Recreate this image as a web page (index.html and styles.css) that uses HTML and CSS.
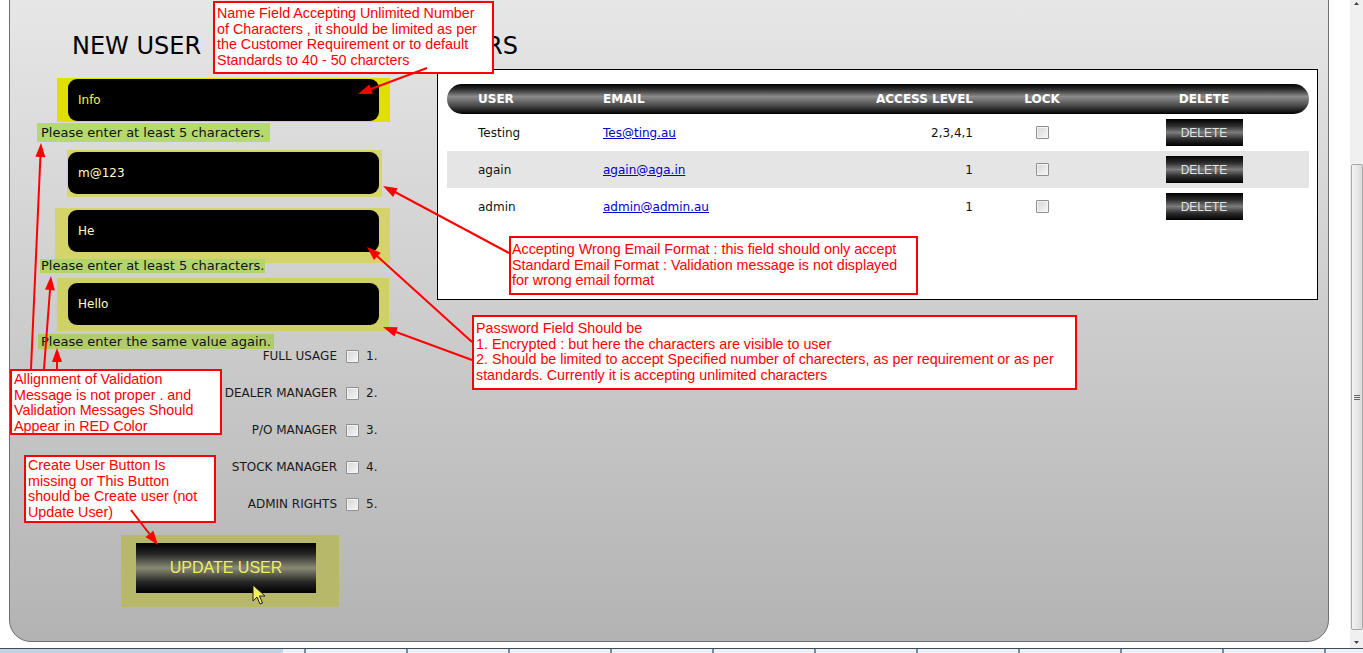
FILE: index.html
```html
<!DOCTYPE html>
<html>
<head>
<meta charset="utf-8">
<title>New User</title>
<link rel="stylesheet" href="styles.css">
</head>
<body>
<div class="page">
  <div class="viewport">
    <div class="main">
      <div class="panel">
        <div class="left-col">
          <h2 class="title title-left">NEW USER</h2>
          <form class="user-form">
            <div class="field field-name"><input class="txt txt-focus" value="Info"></div>
            <div class="err err-1">Please enter at least 5 characters.</div>
            <div class="field field-email"><input class="txt" value="m@123"></div>
            <div class="field field-pass"><input class="txt" value="He"></div>
            <div class="err err-2">Please enter at least 5 characters.</div>
            <div class="field field-confirm"><input class="txt" value="Hello"></div>
            <div class="err err-3">Please enter the same value again.</div>
            <div class="roles">
              <label class="role"><span class="role-name">FULL USAGE</span><input type="checkbox" class="chk"><span class="role-num">1.</span></label>
              <label class="role"><span class="role-name">DEALER MANAGER</span><input type="checkbox" class="chk"><span class="role-num">2.</span></label>
              <label class="role"><span class="role-name">P/O MANAGER</span><input type="checkbox" class="chk"><span class="role-num">3.</span></label>
              <label class="role"><span class="role-name">STOCK MANAGER</span><input type="checkbox" class="chk"><span class="role-num">4.</span></label>
              <label class="role"><span class="role-name">ADMIN RIGHTS</span><input type="checkbox" class="chk"><span class="role-num">5.</span></label>
            </div>
            <div class="submit-wrap"><button type="button" class="btn-update">UPDATE USER</button></div>
          </form>
        </div>
        <div class="right-col">
          <h2 class="title title-right">USERS</h2>
          <div class="table-box">
            <div class="trow thead">
              <div class="c-user">USER</div>
              <div class="c-email">EMAIL</div>
              <div class="c-access">ACCESS LEVEL</div>
              <div class="c-lock">LOCK</div>
              <div class="c-del">DELETE</div>
            </div>
            <div class="trow">
              <div class="c-user">Testing</div>
              <div class="c-email"><a href="#">Tes@ting.au</a></div>
              <div class="c-access">2,3,4,1</div>
              <div class="c-lock"><input type="checkbox" class="chk chk-t"></div>
              <div class="c-del"><button type="button" class="btn-del">DELETE</button></div>
            </div>
            <div class="trow alt">
              <div class="c-user">again</div>
              <div class="c-email"><a href="#">again@aga.in</a></div>
              <div class="c-access">1</div>
              <div class="c-lock"><input type="checkbox" class="chk chk-t"></div>
              <div class="c-del"><button type="button" class="btn-del">DELETE</button></div>
            </div>
            <div class="trow">
              <div class="c-user">admin</div>
              <div class="c-email"><a href="#">admin@admin.au</a></div>
              <div class="c-access">1</div>
              <div class="c-lock"><input type="checkbox" class="chk chk-t"></div>
              <div class="c-del"><button type="button" class="btn-del">DELETE</button></div>
            </div>
          </div>
        </div>
      </div>
    </div>
    <div class="scrollbar">
      <svg class="sb-btn" width="13" height="17" viewBox="0 0 13 17"><path d="M4 5 L6.5 2 L9 5 Z" fill="#444"/></svg>
      <div class="sb-thumb"><span></span><span></span><span></span></div>
      <div class="sb-space"></div>
      <svg class="sb-btn" width="13" height="17" viewBox="0 0 13 17"><path d="M4 10 L9 10 L6.5 13 Z" fill="#444"/></svg>
    </div>
  </div>
  <div class="taskbar"></div>

  <div class="note note-1">Name Field Accepting Unlimited Number<br>of Characters , it should be limited as per<br>the Customer Requirement or to default<br>Standards to 40 - 50 charcters</div>
  <div class="note note-2">Accepting Wrong Email Format : this field should only accept<br>Standard Email Format : Validation message is not displayed<br>for wrong email format</div>
  <div class="note note-3">Password Field Should be<br>1. Encrypted : but here the characters are visible to user<br>2. Should be limited to accept Specified number of charecters, as per requirement or as per<br>standards. Currently it is accepting unlimited characters</div>
  <div class="note note-4">Allignment of Validation<br>Message is not proper . and<br>Validation Messages Should<br>Appear in RED Color</div>
  <div class="note note-5">Create User Button Is<br>missing or This Button<br>should be Create user (not<br>Update User)</div>

  <svg class="arrows" width="1363" height="653" viewBox="0 0 1363 653">
    <g stroke="#f00" stroke-width="2" fill="none">
      <line x1="427" y1="68" x2="371" y2="89"/>
      <line x1="509" y1="253" x2="395" y2="192"/>
      <line x1="472" y1="342" x2="377" y2="256"/>
      <line x1="472" y1="360" x2="396" y2="332"/>
      <line x1="31" y1="369" x2="40.4" y2="157"/>
      <line x1="44" y1="369" x2="50" y2="290"/>
      <line x1="57" y1="369" x2="57" y2="362"/>
      <line x1="131" y1="510" x2="149.5" y2="534"/>
    </g>
    <g fill="#f00">
      <polygon points="358,94 372.9,93.8 369.3,84.4"/>
      <polygon points="383,186 393.1,197 397.7,188.2"/>
      <polygon points="367,247 374,260.1 380.8,252.7"/>
      <polygon points="383,327 394.4,336.6 397.8,327.2"/>
      <polygon points="41,143 35.4,156.8 45.4,157.2"/>
      <polygon points="51,276 45,289.6 54.9,290.4"/>
      <polygon points="57,348 52,362 62,362"/>
      <polygon points="158,545 153.4,530.8 145.5,537"/>
    </g>
  </svg>

  <svg class="cursor" width="14" height="22" viewBox="0 0 14 22">
    <path d="M1 1 L1 17 L5 13 L8 20 L10.5 19 L7.5 12 L13 12 Z" fill="#f4f060" stroke="#222" stroke-width="1" stroke-linejoin="round"/>
  </svg>
</div>
</body>
</html>
```

FILE: styles.css
```css
* { box-sizing: border-box; }

html, body {
  margin: 0;
  padding: 0;
  background: #fff;
}

body {
  font-family: "DejaVu Sans", Verdana, sans-serif;
  font-size: 12px;
  color: #111;
  overflow: hidden;
}

.page {
  position: relative;
  width: 1363px;
  height: 653px;
  overflow: hidden;
  display: flex;
  flex-direction: column;
}

.viewport {
  display: flex;
  height: 648px;
  flex: none;
}

.main {
  width: 1350px;
  height: 648px;
  overflow: hidden;
  flex: none;
}

.panel {
  margin: -20px 0 0 9px;
  width: 1320px;
  height: 662px;
  border: 1px solid #6e6e6e;
  border-radius: 0 0 22px 22px;
  background: linear-gradient(to bottom, #e8e8e8, #b3b3b3);
  padding-top: 51px;
  display: flex;
}

.left-col { width: 427px; flex: none; }
.right-col { width: 881px; flex: none; }

.title {
  margin: 0;
  font-weight: normal;
  font-size: 24px;
  line-height: 28px;
  color: #000;
  white-space: nowrap;
}
.title-left { margin-left: 62px; }
.title-right { margin-left: 1px; }

.user-form { margin-top: 18px; }

.field { width: max-content; }

.txt {
  display: block;
  width: 311px;
  height: 42px;
  border: 0;
  outline: 0;
  border-radius: 9px;
  background: #000;
  color: #ffffc4;
  font: 12px "DejaVu Sans", Verdana, sans-serif;
  padding: 0 10px;
}
.txt-focus { color: #f6f640; }

.field-name {
  margin-left: 47px;
  padding: 1px 11px;
  background: #e0e000;
}
.field-email {
  margin: 8px 0 0 57px;
  padding: 2px 3px 3px 1px;
  background: #d6d66c;
}
.field-pass {
  margin: 11px 0 0 45px;
  padding: 2px 11px 11px 13px;
  background: #d4d46a;
}
.field-confirm {
  margin: 5px 0 0 47px;
  padding: 5px 10px 6px 11px;
  background: #d0d068;
}

.err {
  width: max-content;
  font-size: 13px;
  color: #111;
  white-space: nowrap;
}
.err-1 {
  margin: 1px 0 0 27px;
  padding: 0 6px 0 4px;
  line-height: 19px;
  background: #b4da6c;
}
.err-2 {
  margin: -4px 0 0 30px;
  padding: 0 1px;
  line-height: 14px;
  background: #b2d46c;
}
.err-3 {
  margin: 3px 0 0 28px;
  padding: 0 3px;
  line-height: 15px;
  background: #b0cc6a;
}

.roles {
  margin-top: -3px;
  display: flex;
  flex-direction: column;
  gap: 17px;
}
.role {
  display: flex;
  align-items: center;
  height: 20px;
}
.role-name {
  width: 327px;
  text-align: right;
  font-size: 12px;
  color: #1a1a1a;
}
.role-num {
  margin-left: 7px;
  font-size: 12px;
  color: #1a1a1a;
}

.chk {
  -webkit-appearance: none;
  appearance: none;
  display: inline-block;
  margin: 0 0 0 9px;
  width: 13px;
  height: 13px;
  border: 1px solid #8e8f8f;
  border-radius: 1px;
  background: linear-gradient(135deg, #d6d6d6, #f7f7f7);
  box-shadow: inset 0 0 0 1px #f4f4f4;
  vertical-align: middle;
}
.chk-t { margin: -1px 0 0 0; }

.submit-wrap {
  margin: 21px 0 0 111px;
  width: 218px;
  height: 72px;
  padding: 8px 0 0 15px;
  background: #b8b86a;
}
.btn-update {
  display: block;
  width: 180px;
  height: 50px;
  border: 0;
  padding: 0;
  background: linear-gradient(to bottom, #000 0%, #262626 22%, #8a8a74 50%, #262626 78%, #000 100%);
  color: #eeee66;
  font: 16px "Liberation Sans", Arial, sans-serif;
}

.table-box {
  margin-top: 9px;
  width: 881px;
  height: 231px;
  border: 1px solid #000;
  background: #fff;
  padding: 14px 8px 0 9px;
}
.trow {
  display: grid;
  grid-template-columns: 156px 197px 200px 84px 224px;
  align-items: center;
  height: 37px;
  font-size: 12px;
  color: #111;
}
.trow.alt { background: #e5e5e5; }
.thead {
  height: 30px;
  border-radius: 15px;
  background: linear-gradient(to bottom, #000 0%, #2e2e2e 18%, #8c8c8c 42%, #4a4a4a 72%, #000 100%);
  color: #fff;
  font-weight: bold;
}
.c-user { padding-left: 31px; }
.c-access { text-align: right; padding-right: 27px; }
.c-lock { text-align: center; }
.c-del { padding-left: 16px; text-align: center; }

.c-email a {
  color: #0000cc;
  text-decoration: underline;
}

.btn-del {
  display: inline-block;
  vertical-align: middle;
  width: 77px;
  height: 27px;
  border: 0;
  padding: 0;
  background: linear-gradient(to bottom, #000 0%, #2c2c2c 25%, #7c7c7c 50%, #2c2c2c 75%, #000 100%);
  color: #e2e2e2;
  font: 12px "Liberation Sans", Arial, sans-serif;
}

.scrollbar {
  width: 13px;
  height: 648px;
  flex: none;
  background: #f0f0f0;
  display: flex;
  flex-direction: column;
}
.sb-btn { display: block; flex: none; }
.sb-thumb {
  margin: 147px 0 0 1px;
  width: 12px;
  height: 466px;
  flex: none;
  border: 1px solid #a9a9a9;
  border-radius: 2px;
  background: linear-gradient(to right, #f4f4f4, #dadada);
  display: flex;
  flex-direction: column;
  align-items: center;
  justify-content: center;
  gap: 1px;
}
.sb-thumb span {
  display: block;
  width: 6px;
  height: 1px;
  background: #666;
}
.sb-space { flex: 1; }

.taskbar {
  height: 5px;
  flex: none;
  border-top: 1px solid #3d4b5a;
  background:
    linear-gradient(to right, #c4d2e2 0, #c4d2e2 283px, transparent 283px),
    repeating-linear-gradient(to right, #eef1f5 0, #eef1f5 100px, #7e8b9a 100px, #7e8b9a 102px);
}

.note {
  position: absolute;
  background: #fff;
  border: 2px solid #f00;
  color: #f00;
  font: 14.3px/15.6px "Liberation Sans", Arial, sans-serif;
  white-space: nowrap;
}
.note-1 { left: 213px; top: 1px; width: 281px; height: 73px; padding: 3px 0 0 2px; }
.note-2 { left: 509px; top: 236px; width: 409px; height: 59px; padding: 4px 0 0 1px; }
.note-3 { left: 472px; top: 315px; width: 605px; height: 75px; padding: 4px 0 0 2px; }
.note-4 { left: 10px; top: 369px; width: 212px; height: 66px; padding: 1px 0 0 2px; }
.note-5 { left: 24px; top: 455px; width: 192px; height: 68px; padding: 1px 0 0 2px; }

.arrows {
  position: absolute;
  left: 0;
  top: 0;
  pointer-events: none;
}

.cursor {
  position: absolute;
  left: 252px;
  top: 584px;
  pointer-events: none;
}
```
